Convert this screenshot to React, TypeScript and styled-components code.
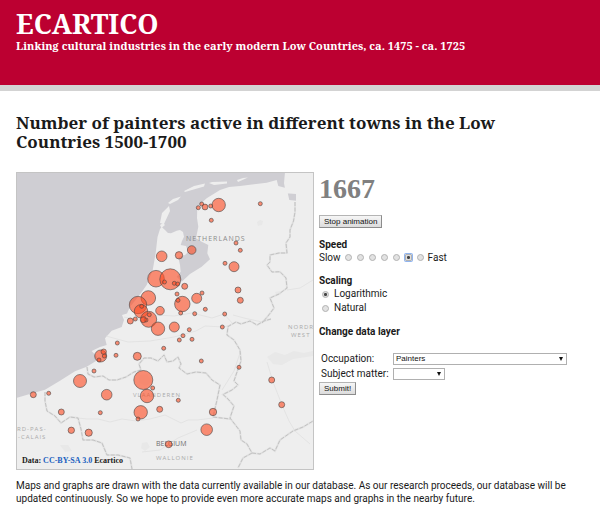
import React, { useState } from 'react';
import styled, { createGlobalStyle } from 'styled-components';

const serif = `'Noto Serif', 'DejaVu Serif', serif`;
const sans = `Roboto, 'Noto Sans', sans-serif`;

const GlobalStyle = createGlobalStyle`
  *, *::before, *::after { box-sizing: border-box; }
  body {
    margin: 0;
    background: #fff;
    color: #1a1a1a;
    font-family: ${sans};
    font-size: 10px;
    line-height: 13px;
  }
`;

const Header = styled.header`
  padding: 8px 16px 32px;
  background: #bc0031;
  border-bottom: 6px solid #d3d3d3;
  color: #fff;
  font-family: ${serif};
  font-weight: 700;
`;

const SiteName = styled.h1`
  margin: 0;
  font-size: 27px;
  line-height: 31px;
`;

const Tagline = styled.p`
  margin: 0;
  font-size: 11px;
  line-height: 14px;
`;

const Main = styled.main`
  padding: 22px 16px 14px;
`;

const Title = styled.h2`
  margin: 0 0 21px;
  max-width: 520px;
  font-family: ${serif};
  font-size: 17px;
  font-weight: 700;
  line-height: 19px;
`;

const Columns = styled.div`
  display: flex;
  gap: 5px;
`;

const MapFrame = styled.figure`
  position: relative;
  flex: none;
  width: 298px;
  margin: 0;
  border: 1px solid #c4c4c4;
`;

const MapDrawing = styled.svg`
  display: block;
  width: 100%;
  height: auto;
  background: #cfced3;
`;

const Attribution = styled.figcaption`
  position: absolute;
  left: 5px;
  bottom: 3px;
  font: 700 8px/10px 'Liberation Serif', serif;

  a { color: #1a5fc0; text-decoration: none; }
`;

const Side = styled.form`
  flex: 1;
  min-width: 0;
`;

const Year = styled.output`
  display: block;
  margin-bottom: 9px;
  color: #808080;
  font: 700 28px/34px 'Liberation Serif', serif;
`;

const Button = styled.button`
  display: block;
  height: 13px;
  padding: 0 4px;
  border: 1px solid;
  border-color: #b4b4b4 #8c8c8c #8c8c8c #b4b4b4;
  background: linear-gradient(#f6f6f6, #dcdcdc);
  color: #111;
  font: 8px/10px 'Liberation Sans', sans-serif;
`;

const Group = styled.fieldset`
  min-width: 0;
  margin: 10px 0 0;
  padding: 0;
  border: 0;
`;

const GroupTitle = styled.legend`
  padding: 0;
  font-weight: 700;
`;

const SpeedRow = styled.div`
  display: flex;
  align-items: center;
  gap: 4px;
`;

const Dots = styled.div`
  display: flex;
  gap: 5px;
`;

const Option = styled.label`
  display: flex;
  align-items: center;
  gap: 5px;
  padding-left: 3px;
  line-height: 14px;
`;

const Radio = styled.input<{ $ringed?: boolean }>`
  appearance: none;
  flex: none;
  width: 7px;
  height: 7px;
  margin: 0;
  border: 1px solid #b2b2b2;
  border-radius: 50%;
  background: #e2e2e2;

  &:checked {
    background: radial-gradient(circle, #444 35%, #dedede 50%);
    box-shadow: ${p => (p.$ringed ? '0 0 0 1px #8fb4f0' : 'none')};
    border-radius: ${p => (p.$ringed ? '1px' : '50%')};
  }
`;

const Fields = styled.div`
  display: grid;
  grid-template-columns: 72px minmax(0, 174px);
  row-gap: 2px;
  padding: 14px 0 2px 2px;
  align-items: center;
  white-space: nowrap;
`;

const Picker = styled.div<{ $short?: boolean }>`
  position: relative;
  width: ${p => (p.$short ? '30%' : '100%')};
`;

const Select = styled.select`
  appearance: none;
  display: block;
  width: 100%;
  height: 12px;
  padding: 0 10px 0 2px;
  border: 1px solid #b0b0b0;
  border-radius: 0;
  background: #fff;
  color: #111;
  font: 8px/10px 'Liberation Sans', sans-serif;
`;

const Arrow = styled.svg`
  position: absolute;
  right: 4px;
  top: 4px;
  width: 4px;
  height: 4px;
  pointer-events: none;
`;

const Note = styled.p`
  margin: 9px 0 0;
`;

const towns: [number, number, number][] = [
  [161.7, 256.3, 5.3], [156, 278.7, 8.3], [148.3, 298, 7.3], [138, 305, 8.7], [141, 311.3, 6.7],
  [141.7, 306.3, 2], [160, 310.7, 4.3], [148.7, 319.3, 8], [130.3, 321, 3], [135.3, 319, 2],
  [146, 320, 2], [149.3, 314.7, 2], [143.3, 319.7, 3], [218.7, 205, 6.7], [201.7, 204, 2],
  [198.3, 207.7, 2], [205, 207, 2.9], [210.7, 206, 2], [211.3, 220.3, 2], [260.3, 203.7, 2],
  [236, 243, 2], [240.3, 250.3, 2], [225, 263.3, 2], [234, 266.7, 5], [191.7, 250, 4.3],
  [179, 255.3, 3.7], [170.3, 279.3, 10.5], [164.5, 282, 2], [174.3, 283.3, 2], [177.7, 284, 2],
  [184.7, 286.3, 3], [177, 294, 2], [182.3, 304, 7.7], [178, 300.3, 2], [196.7, 298.3, 5],
  [202, 293, 2], [205.3, 309.3, 2], [194.7, 313.7, 2], [180.7, 313, 2], [224.7, 314, 2],
  [238, 290, 3], [240.3, 300.3, 3], [174.3, 327, 5], [189.3, 329.7, 2], [183, 335.7, 2],
  [179.3, 340, 2], [192, 339.3, 2], [163.7, 348.3, 2], [201.3, 361, 2], [222.3, 327, 2],
  [239, 367.3, 2], [271.7, 380, 3], [281.7, 404.7, 3], [213, 412, 3.7], [206.7, 429.7, 5.8],
  [178.3, 400.3, 2], [168.7, 444.3, 3.4], [158, 328.7, 6.7], [137.3, 356.3, 4], [117.3, 343, 2],
  [116, 355.3, 2], [100.7, 356, 6], [103.7, 351.7, 2.7], [104.3, 356, 2], [99, 360, 2],
  [94, 371, 2], [80, 381, 6.5], [106.7, 394.7, 5.3], [143.3, 380, 9.5], [147, 396, 6.7],
  [152.7, 388, 2], [140.7, 412.3, 6.7], [138, 419, 2], [159.7, 409.3, 3], [100.3, 412.7, 2],
  [61.3, 412, 3], [48.7, 393.3, 2], [33.3, 394.7, 3], [71.3, 430.3, 3.2], [88.7, 432.7, 3.6],
];

const mainland =
  'M161.7 227L165 230L168 233L171 233.3L176.7 230.7L180 230L183 232L184 236.7L182 241L180.7 245L186 246L188.3 251.7L185 255L178.3 257.3L180 265L180.7 271.7L176.7 276.7L181.7 281.7L190 274L201.7 266.7L210 259.3L207.3 253.3L208.3 245L201.7 241.7L196 238.3L198.3 226.7L197 218L197.3 206.7L206.7 198.3L220 190L229 187L240 186L266.7 182.7L276.7 180L278.3 186L286.7 188.3L289.3 200L296 200.7L296 194L286 193.3L284 183.3L285 172H314V470H16V398L33.3 393L45 389.7L60 380.7L75 371.3L86.7 366.7L96 361L97 357L91.7 351L100 347L106.7 345L105 338.3L111.7 330.7L121.7 327L124 320L122 315L127 313.5L130 306.7L138.3 296.7L146.7 285L152.7 270L155.7 253L157.5 237L160 229Z';

const islands =
  'M160 223L162 213L169 206L170 211L164 224ZM168 203L173 199L181 196.5L178 200L170 204ZM184 191L194 186L205 183.5L204 186.5L185 192ZM209 183L212 182L227 181.5L227 183.5L214 185ZM237 180L243 178L248 177.5L238 182ZM160 225L163 223L165 225L161.5 228Z';

const borders = [
  'M295 202L295 212L293.5 221L290 230L290 237L286 243L287 253L279 253L270 255L270 262L267 265L272 272L280 271.7L286 278L287 288L279 294L270 298L274 308L268 316L262 323',
  'M271 319L264 321L257 325L250 321L241 324L236 322L228 326.5L227 335L234 340L240 350L241 361L237 372L234 381L238 385L232 390L223 394.5L228 399L234 406L230 418L240 431L241 440L247 444L252 453L243 458L238 468',
  'M87 367L88 374L94 377L103 376L109 380L117 380L126 377L134 372L141 370L139 364L144 358L151 358L158 361L164 355L167 362L173 361L178 357L181 364L179 368L187 374L196 372L206 373L212 380L220 385L217 400L213 417L230 419',
  'M45 392L45 401L47 411L55 416L61 423L70 417L78 418L81 429L83 440L93 440L102 443L107 455L118 455L130 458L132 469',
  'M252 453L260 454L270 448L275 451L280 440L293 431L303 427L313 421',
];

const thinLines = [
  'M78 418L87 419L98 419L110 422L122 419L136 421L150 419L165 415L173 419L181 423L188 420L197 420L213 418',
  'M124 317L142 321L158 315L174 316L192 313L212 318L224 314L233 324L224 327L205 326L196 331L174 337L150 341L128 342L106 336',
  'M262 322L244 318L233 315M287 290L300 288L313 280M240 353L234 371L222 390M267 362L273 382L282 405L289 421L295 431L310 444M197 430L178 438L160 450L142 452',
];

const speeds = [1, 2, 3, 4, 5, 6, 7];

function TownMap() {
  return (
    <MapDrawing viewBox="17 173 296 296" role="img" aria-label="Map of painters per town">
      <path d={mainland} fill="#eeeeee" />
      <path d={islands} fill="#eeeeee" />
      <path d="M257 222l3-2 3 1-1 4-4 1zM275 292l5-1 1 3-4 2zM267 357l8-5 10 3 9-4 10 2 9-2v5l-20 3-11 6-9-1zM140 375l7-1 5 7-6 5-7-3zM142 443l5-1 3 5-5 4-4-3zM60 445l8 0 4 6-7 1z" fill="#e8e8e8" />
      <g fill="none" stroke="#dedede" strokeWidth="0.7">
        {thinLines.map(d => <path key={d} d={d} />)}
      </g>
      <g fill="none" stroke="#e2e2e2" strokeWidth="2">
        {borders.map(d => <path key={d} d={d} />)}
      </g>
      <g fill="none" stroke="#c2c2c2" strokeWidth="1" strokeDasharray="4 1.5" strokeLinejoin="round">
        {borders.map(d => <path key={d} d={d} />)}
      </g>
      <g fontFamily="'Open Sans', sans-serif" fontSize="7" letterSpacing="1" fill="#aaaaaa">
        <text x="186" y="241" fill="#8c8c8c">NETHERLANDS</text>
        <text x="133" y="397" fontSize="6">VLAANDEREN</text>
        <text x="156" y="446" fill="#707070" letterSpacing="0">BELGIUM</text>
        <text x="156" y="460" fontSize="6">WALLONIE</text>
        <text x="288" y="329" fontSize="6">NORDR</text>
        <text x="291" y="337" fontSize="6">WEST</text>
        <text x="17" y="431" fontSize="6">RD-PAS-</text>
        <text x="18" y="439" fontSize="6">-CALAIS</text>
      </g>
      <g fill="#ff4a20" fillOpacity="0.6" stroke="#444" strokeOpacity="0.75" strokeWidth="0.8">
        {towns.map(([x, y, r]) => <circle key={`${x}-${y}`} cx={x} cy={y} r={r} />)}
      </g>
    </MapDrawing>
  );
}

function DropArrow() {
  return (
    <Arrow viewBox="0 0 4 4" aria-hidden="true">
      <path d="M0 0H4L2 4Z" fill="#111" />
    </Arrow>
  );
}

export default function App() {
  const [speed, setSpeed] = useState(6);
  const [scale, setScale] = useState('Logarithmic');
  const [running, setRunning] = useState(true);

  return (
    <>
      <GlobalStyle />
      <Header>
        <SiteName>ECARTICO</SiteName>
        <Tagline>Linking cultural industries in the early modern Low Countries, ca. 1475 - ca. 1725</Tagline>
      </Header>
      <Main>
        <Title>Number of painters active in different towns in the Low Countries 1500-1700</Title>
        <Columns>
          <MapFrame>
            <TownMap />
            <Attribution>
              Data: <a href="https://creativecommons.org/licenses/by-sa/3.0/">CC-BY-SA 3.0</a> Ecartico
            </Attribution>
          </MapFrame>
          <Side onSubmit={e => e.preventDefault()}>
            <Year>1667</Year>
            <Button type="button" onClick={() => setRunning(!running)}>
              {running ? 'Stop animation' : 'Start animation'}
            </Button>
            <Group>
              <GroupTitle>Speed</GroupTitle>
              <SpeedRow>
                <span>Slow</span>
                <Dots>
                  {speeds.map(n => (
                    <Radio
                      key={n}
                      type="radio"
                      name="speed"
                      aria-label={`Speed ${n}`}
                      $ringed
                      checked={speed === n}
                      onChange={() => setSpeed(n)}
                    />
                  ))}
                </Dots>
                <span>Fast</span>
              </SpeedRow>
            </Group>
            <Group>
              <GroupTitle>Scaling</GroupTitle>
              {['Logarithmic', 'Natural'].map(name => (
                <Option key={name}>
                  <Radio
                    type="radio"
                    name="scaling"
                    checked={scale === name}
                    onChange={() => setScale(name)}
                  />
                  {name}
                </Option>
              ))}
            </Group>
            <Group>
              <GroupTitle>Change data layer</GroupTitle>
              <Fields>
                <label htmlFor="occupation">Occupation:</label>
                <Picker>
                  <Select id="occupation" defaultValue="Painters">
                    <option>Painters</option>
                  </Select>
                  <DropArrow />
                </Picker>
                <label htmlFor="subject">Subject matter:</label>
                <Picker $short>
                  <Select id="subject" defaultValue="">
                    <option value=""></option>
                  </Select>
                  <DropArrow />
                </Picker>
              </Fields>
            </Group>
            <Button type="submit">Submit!</Button>
          </Side>
        </Columns>
        <Note>
          Maps and graphs are drawn with the data currently available in our database. As our research
          proceeds, our database will be updated continuously. So we hope to provide even more accurate
          maps and graphs in the nearby future.
        </Note>
      </Main>
    </>
  );
}
